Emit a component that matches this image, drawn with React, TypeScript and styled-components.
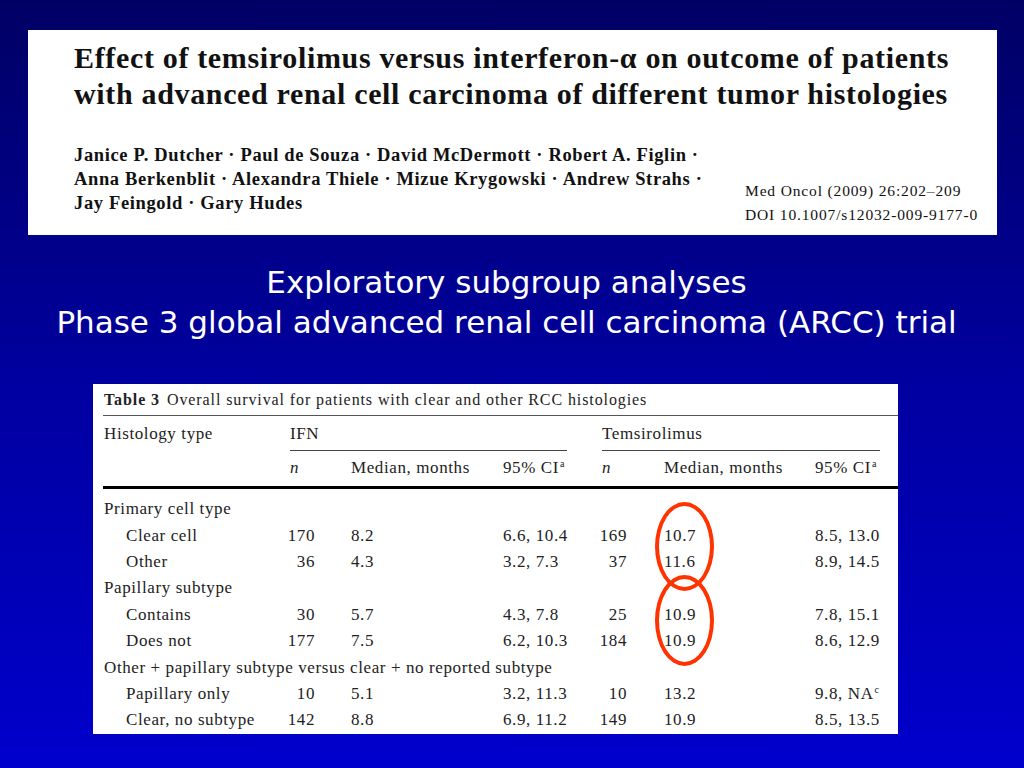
import React from "react";
import styled, { createGlobalStyle } from "styled-components";

const Global = createGlobalStyle`
  html, body { margin: 0; padding: 0; }
  body { width: 1024px; height: 768px; overflow: hidden; }
`;

const Slide = styled.div`
  width: 1024px;
  height: 768px;
  background: linear-gradient(to bottom, #000064 0%, #0000a0 50%, #0000cc 100%);
  display: flex;
  flex-direction: column;
  align-items: flex-start;
  box-sizing: border-box;
  padding-top: 30px;
`;

const PaperHeader = styled.div`
  margin-left: 28px;
  width: 969px;
  height: 205px;
  background: #fff;
  box-sizing: border-box;
  padding: 10px 0 0 46px;
  display: flex;
  flex-direction: column;
  font-family: "Liberation Serif", "Times New Roman", serif;
  color: #111;
`;

const PaperTitle = styled.div`
  font-size: 30px;
  font-weight: bold;
  line-height: 36px;
  letter-spacing: 0.66px;
  white-space: nowrap;
`;

const AuthorsRow = styled.div`
  margin-top: 31px;
  display: flex;
  align-items: flex-start;
`;

const Authors = styled.div`
  width: 671px;
  font-size: 18.5px;
  font-weight: bold;
  line-height: 24px;
  letter-spacing: 0.64px;
  white-space: nowrap;
`;

const Citation = styled.div`
  margin-top: 36px;
  font-size: 15.5px;
  line-height: 24px;
  letter-spacing: 0.85px;
  white-space: nowrap;
`;

const Heading = styled.div`
  align-self: center;
  margin-top: 27px;
  margin-right: 11px;
  text-align: center;
  color: #fff;
  font-family: "DejaVu Sans", "Comic Sans MS", sans-serif;
  font-size: 31px;
  line-height: 40px;
  white-space: nowrap;
`;

const TableCard = styled.div`
  position: relative;
  margin-top: 42px;
  margin-left: 93px;
  width: 805px;
  height: 350px;
  background: #fff;
  box-sizing: border-box;
  padding-left: 10px;
  font-family: "Liberation Serif", "Times New Roman", serif;
  font-size: 17px;
  letter-spacing: 0.6px;
  color: #222;
`;

const Caption = styled.div`
  height: 31px;
  border-bottom: 1px solid #555;
  display: flex;
  align-items: center;
  padding-left: 1px;
  font-size: 16px;
  letter-spacing: 0.9px;
  white-space: nowrap;
  b { margin-right: 7px; }
`;

const Grid = styled.div`
  display: grid;
  grid-template-columns: 187px 25px 188px 99px 25px 188px 1fr;
`;

const Cell = styled.div<{ $span?: number; $right?: boolean; $pad?: number; $italic?: boolean }>`
  grid-column: span ${(p) => p.$span ?? 1};
  height: 26.4px;
  display: flex;
  align-items: center;
  justify-content: ${(p) => (p.$right ? "flex-end" : "flex-start")};
  padding-left: ${(p) => p.$pad ?? 0}px;
  font-style: ${(p) => (p.$italic ? "italic" : "normal")};
  white-space: nowrap;
  sup { font-size: 10px; margin-left: 1px; position: relative; top: -4px; vertical-align: top; line-height: 1; letter-spacing: 0; }
`;

const HeadCell = styled(Cell)`
  height: 35px;
  padding-top: 1px;
  box-sizing: border-box;
`;

const GroupCell = styled.div<{ $span: number; $trim: number }>`
  grid-column: span ${(p) => p.$span};
  height: 35px;
  margin-right: ${(p) => p.$trim}px;
  border-bottom: 1px solid #444;
  display: flex;
  align-items: center;
  box-sizing: border-box;
  padding-top: 1px;
`;

const SubHead = styled(Cell)`
  height: 35px;
  box-sizing: border-box;
  padding-bottom: 1px;
`;

const ThickRule = styled.div`
  grid-column: 1 / -1;
  height: 3px;
  background: #000;
  margin-bottom: 7px;
`;

const Oval = styled.div<{ $top: number; $h: number }>`
  position: absolute;
  left: 562px;
  top: ${(p) => p.$top}px;
  width: 59px;
  height: ${(p) => p.$h}px;
  border: 4px solid #ff3300;
  border-radius: 50%;
  box-sizing: border-box;
`;

type Row = { label: string; v?: string[] };

const rows: Row[] = [
  { label: "Primary cell type" },
  { label: "Clear cell", v: ["170", "8.2", "6.6, 10.4", "169", "10.7", "8.5, 13.0"] },
  { label: "Other", v: ["36", "4.3", "3.2, 7.3", "37", "11.6", "8.9, 14.5"] },
  { label: "Papillary subtype" },
  { label: "Contains", v: ["30", "5.7", "4.3, 7.8", "25", "10.9", "7.8, 15.1"] },
  { label: "Does not", v: ["177", "7.5", "6.2, 10.3", "184", "10.9", "8.6, 12.9"] },
  { label: "Other + papillary subtype versus clear + no reported subtype" },
  { label: "Papillary only", v: ["10", "5.1", "3.2, 11.3", "10", "13.2", "9.8, NA^c"] },
  { label: "Clear, no subtype", v: ["142", "8.8", "6.9, 11.2", "149", "10.9", "8.5, 13.5"] },
];

const renderCI = (s: string) => {
  if (s.endsWith("^c")) {
    return (
      <>
        {s.slice(0, -2)}
        <sup>c</sup>
      </>
    );
  }
  return s;
};

export default function App() {
  return (
    <>
      <Global />
      <Slide>
        <PaperHeader>
          <PaperTitle>
            Effect of temsirolimus versus interferon-α on outcome of patients
            <br />
            with advanced renal cell carcinoma of different tumor histologies
          </PaperTitle>
          <AuthorsRow>
            <Authors>
              Janice P. Dutcher · Paul de Souza · David McDermott · Robert A. Figlin ·
              <br />
              Anna Berkenblit · Alexandra Thiele · Mizue Krygowski · Andrew Strahs ·
              <br />
              Jay Feingold · Gary Hudes
            </Authors>
            <Citation>
              Med Oncol (2009) 26:202–209
              <br />
              DOI 10.1007/s12032-009-9177-0
            </Citation>
          </AuthorsRow>
        </PaperHeader>

        <Heading>
          Exploratory subgroup analyses
          <br />
          Phase 3 global advanced renal cell carcinoma (ARCC) trial
        </Heading>

        <TableCard>
          <Caption>
            <b>Table 3</b> Overall survival for patients with clear and other RCC histologies
          </Caption>
          <Grid>
            <HeadCell $pad={1}>Histology type</HeadCell>
            <GroupCell $span={3} $trim={35}>IFN</GroupCell>
            <GroupCell $span={3} $trim={18}>Temsirolimus</GroupCell>

            <SubHead />
            <SubHead $italic>n</SubHead>
            <SubHead $pad={36}>Median, months</SubHead>
            <SubHead>
              95% CI<sup>a</sup>
            </SubHead>
            <SubHead $italic>n</SubHead>
            <SubHead $pad={37}>Median, months</SubHead>
            <SubHead>
              95% CI<sup>a</sup>
            </SubHead>

            <ThickRule />

            {rows.map((r, i) =>
              r.v ? (
                <React.Fragment key={i}>
                  <Cell $pad={23}>{r.label}</Cell>
                  <Cell $right>{r.v[0]}</Cell>
                  <Cell $pad={36}>{r.v[1]}</Cell>
                  <Cell>{r.v[2]}</Cell>
                  <Cell $right>{r.v[3]}</Cell>
                  <Cell $pad={37}>{r.v[4]}</Cell>
                  <Cell>{renderCI(r.v[5])}</Cell>
                </React.Fragment>
              ) : (
                <Cell key={i} $span={7} $pad={1}>
                  {r.label}
                </Cell>
              )
            )}
          </Grid>
          <Oval $top={118} $h={89} />
          <Oval $top={191} $h={91} />
        </TableCard>
      </Slide>
    </>
  );
}
